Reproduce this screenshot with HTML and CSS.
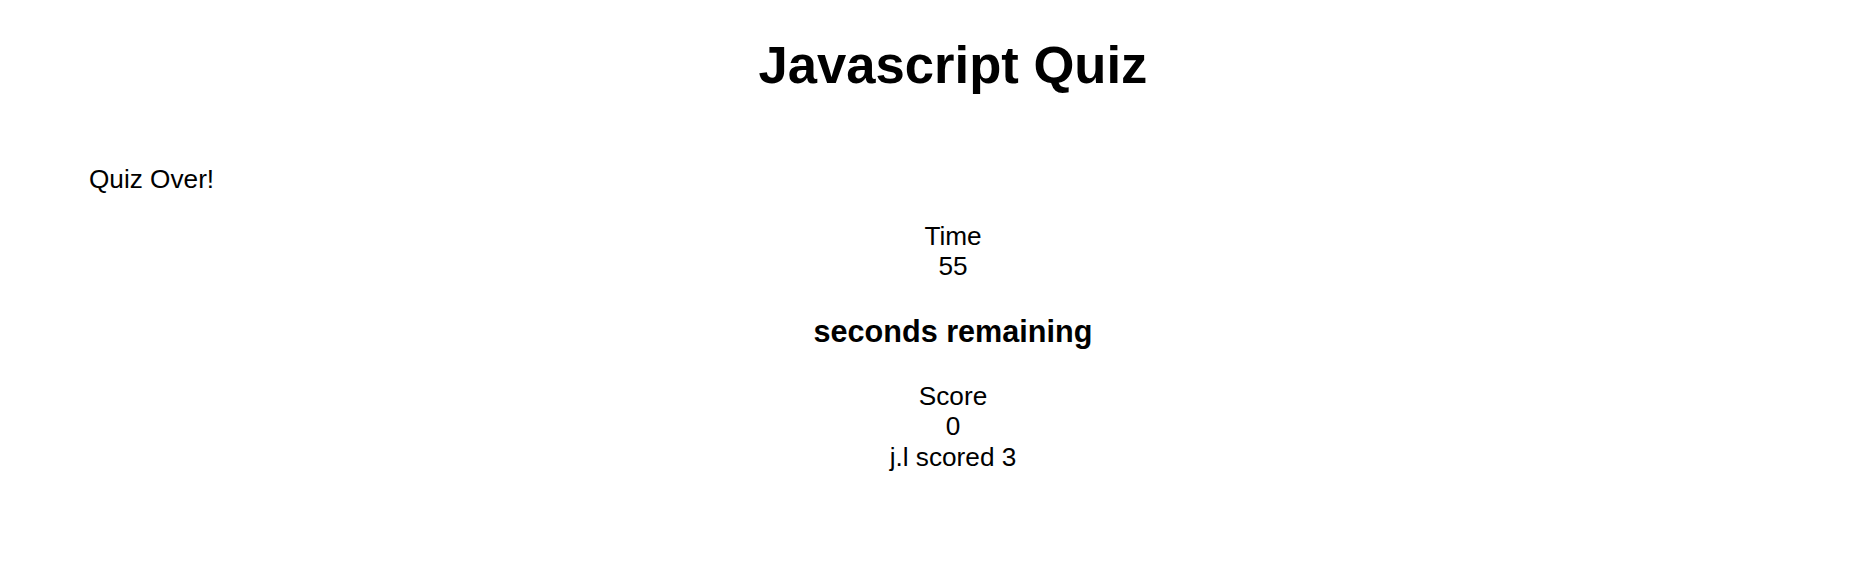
FILE: index.html
```html
<!DOCTYPE html>
<html lang="en">
<head>
<meta charset="utf-8">
<title>Javascript Quiz</title>
<link rel="stylesheet" href="styles.css">
</head>
<body>
  <h1 class="title">Javascript Quiz</h1>
  <div class="quiz">
    <div class="status">Quiz Over!</div>
    <div class="timer">
      <div class="label">Time</div>
      <div class="value">55</div>
      <h3 class="remaining">seconds remaining</h3>
    </div>
    <div class="score">
      <div class="label">Score</div>
      <div class="value">0</div>
      <div class="entry">j.l scored 3</div>
    </div>
  </div>
</body>
</html>
```
FILE: styles.css
```css
html, body {
  background: #fff;
}
body {
  margin: 0;
  padding: 0 13px 0 49px;
  font-family: "Liberation Sans", Arial, sans-serif;
  font-size: 26.2px;
  line-height: 30.5px;
  color: #000;
}
.title {
  margin: 35px 0 0;
  font-size: 52.6px;
  line-height: 60px;
  font-weight: bold;
  text-align: center;
}
.status {
  margin-top: 69px;
  padding-left: 40px;
}
.timer {
  margin-top: 26px;
  text-align: center;
}
.remaining {
  margin: 32px 0 32px;
  font-size: 30.6px;
  line-height: 35px;
  font-weight: bold;
}
.score {
  text-align: center;
}
```
